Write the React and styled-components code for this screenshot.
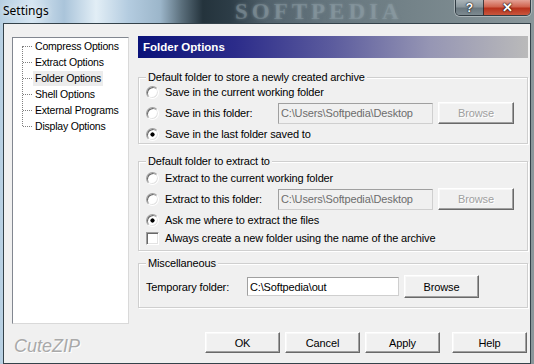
import styled, { createGlobalStyle } from "styled-components";

const GlobalStyle = createGlobalStyle`
  html, body {
    margin: 0;
    padding: 0;
    background: #7d8c92;
  }
  * {
    box-sizing: border-box;
  }
`;

const uiFont = `"Liberation Sans", Arial, sans-serif`;

const Window = styled.div`
  position: relative;
  width: 534px;
  height: 364px;
  overflow: hidden;
  display: flex;
  flex-direction: column;
  padding: 0 3px;
  background: linear-gradient(
    to right,
    #b6cfe2 0%,
    #d6e6f2 6%,
    #aac4da 12%,
    #e2eef6 18%,
    #b4cce0 24%,
    #9cb6ca 30%,
    #5b6f7c 34%,
    #24333c 38%,
    #2c3c46 43%,
    #52626c 50%,
    #66767e 62%,
    #738288 76%,
    #7f8d92 90%,
    #8a979b 100%
  );
`;

const TitleBar = styled.div`
  position: relative;
  height: 23px;
  display: flex;
  align-items: flex-start;
  flex-shrink: 0;
`;

const Title = styled.span`
  font-family: "Noto Sans", "Open Sans", sans-serif;
  font-size: 12px;
  line-height: 21px;
  color: #000;
  text-shadow: 0 0 6px rgba(255, 255, 255, 0.9);
`;

const Watermark = styled.span`
  position: absolute;
  left: 232px;
  top: 1px;
  font-family: "Liberation Serif", serif;
  font-weight: bold;
  font-size: 23px;
  line-height: 22px;
  letter-spacing: 4px;
  color: rgba(150, 166, 174, 0.4);
  text-shadow: 0 0 3px rgba(150, 166, 174, 0.5);
  pointer-events: none;
`;

const CaptionButtons = styled.div`
  margin-left: auto;
  display: flex;
  border: 1px solid rgba(30, 40, 48, 0.8);
  border-top: none;
  border-radius: 0 0 5px 5px;
  overflow: hidden;
  box-shadow: 0 0 0 1px rgba(255, 255, 255, 0.35);
`;

const CaptionButton = styled.div`
  width: ${(p) => p.$w}px;
  height: 15px;
  display: flex;
  align-items: center;
  justify-content: center;
  font-family: ${uiFont};
  font-weight: bold;
  font-size: ${(p) => (p.$close ? 13 : 12)}px;
  color: #fff;
  text-shadow: 0 0 2px #000, 0 0 1px #000;
  background: ${(p) =>
    p.$close
      ? "linear-gradient(to bottom, #e4a296 0%, #d0644f 45%, #b8321c 55%, #c9563d 100%)"
      : "linear-gradient(to bottom, #aab4b8 0%, #8a969c 45%, #6a777e 55%, #7d8a90 100%)"};
  & + & {
    border-left: 1px solid rgba(30, 40, 48, 0.8);
  }
`;

const Client = styled.div`
  flex: 1;
  display: flex;
  gap: 9px;
  padding: 12px 2px 0 8px;
  background: #f0f0f0;
  border: 1px solid #34424a;
`;

const Sidebar = styled.div`
  width: 117px;
  display: flex;
  flex-direction: column;
  flex-shrink: 0;
`;

const Tree = styled.ul`
  position: relative;
  margin: 1px 0 0;
  padding: 0;
  list-style: none;
  height: 287px;
  background: #fff;
  border: 1px solid;
  border-color: #828790 #d9d9d9 #d9d9d9 #828790;
  &::before {
    content: "";
    position: absolute;
    left: 9px;
    top: 8px;
    height: 80px;
    border-left: 1px dotted #808080;
  }
`;

const TreeItem = styled.li`
  position: relative;
  height: 16px;
  padding-left: 20px;
  display: flex;
  align-items: center;
  &::before {
    content: "";
    position: absolute;
    left: 10px;
    top: 8px;
    width: 9px;
    border-top: 1px dotted #808080;
  }
`;

const TreeLabel = styled.span`
  font-family: ${uiFont};
  font-size: 10.5px;
  letter-spacing: -0.2px;
  line-height: 15px;
  padding: 0 2px;
  color: #000;
  background: ${(p) => (p.$selected ? "#ececec" : "transparent")};
`;

const Brand = styled.div`
  margin-top: 12px;
  padding-left: 2px;
  font-family: ${uiFont};
  font-style: italic;
  font-size: 18px;
  line-height: 20px;
  color: #a9a9a9;
  text-shadow: 1px 1px 0 #fff;
`;

const Main = styled.div`
  flex: 1;
  display: flex;
  flex-direction: column;
`;

const Header = styled.div`
  height: 22px;
  display: flex;
  align-items: center;
  padding-left: 5px;
  font-family: ${uiFont};
  font-weight: bold;
  font-size: 11.5px;
  color: #fff;
  background: linear-gradient(
    to right,
    #0a1279 0%,
    #2c2c8a 25%,
    #5c5c9e 50%,
    #9696b4 75%,
    #bababa 100%
  );
`;

const Group = styled.div`
  position: relative;
  margin-top: ${(p) => p.$top}px;
  padding: ${(p) => p.$pad};
  display: flex;
  flex-direction: column;
  gap: 2px;
  border: 1px solid #cfcfcf;
  box-shadow: inset 1px 1px 0 #fff, 1px 1px 0 #fff;
`;

const GroupCaption = styled.span`
  position: absolute;
  left: 7px;
  top: -7px;
  padding: 0 2px;
  background: #f0f0f0;
  font-family: ${uiFont};
  font-size: 11px;
  letter-spacing: -0.15px;
  line-height: 13px;
  color: #000;
`;

const Row = styled.div`
  height: ${(p) => p.$h || 16}px;
  display: flex;
  align-items: center;
  font-family: ${uiFont};
  font-size: 11px;
  letter-spacing: -0.15px;
  color: #000;
`;

const OptionLabel = styled.label`
  display: flex;
  align-items: center;
  gap: 6px;
  width: ${(p) => (p.$w ? `${p.$w}px` : "auto")};
  flex-shrink: 0;
`;

const Radio = styled.span`
  width: 13px;
  height: 13px;
  border-radius: 50%;
  border: 1px solid;
  border-color: #a0a0a0 #fff #fff #a0a0a0;
  box-shadow: inset 1px 1px 0 #696969, inset -1px -1px 0 #e3e3e3;
  background: ${(p) =>
    p.$checked
      ? "radial-gradient(circle, #000 0, #000 1.8px, #fff 2.4px)"
      : "#fff"};
  flex-shrink: 0;
`;

const Checkbox = styled.span`
  width: 13px;
  height: 13px;
  border: 1px solid;
  border-color: #a0a0a0 #fff #fff #a0a0a0;
  box-shadow: inset 1px 1px 0 #696969, inset -1px -1px 0 #e3e3e3;
  background: #fff;
  flex-shrink: 0;
`;

const PlainLabel = styled.span`
  width: ${(p) => p.$w}px;
  flex-shrink: 0;
`;

const PathInput = styled.div`
  width: ${(p) => p.$w}px;
  height: ${(p) => p.$h || 21}px;
  display: flex;
  align-items: center;
  padding-left: 2px;
  border: 1px solid;
  border-color: #a0a0a0 #cfcfcf #cfcfcf #a0a0a0;
  background: ${(p) => (p.$disabled ? "#f0f0f0" : "#fff")};
  color: ${(p) => (p.$disabled ? "#6d6d6d" : "#000")};
  white-space: nowrap;
  overflow: hidden;
`;

const Button = styled.button`
  width: ${(p) => p.$w || 75}px;
  height: ${(p) => p.$h || 21}px;
  margin-left: ${(p) => p.$gap || 0}px;
  padding: 0;
  font-family: ${uiFont};
  font-size: 11px;
  letter-spacing: -0.15px;
  background: #f0f0f0;
  border: 1px solid;
  border-color: #fff #696969 #696969 #fff;
  box-shadow: inset -1px -1px 0 #a0a0a0, inset 1px 1px 0 #f8f8f8;
  color: ${(p) => (p.disabled ? "#a0a0a0" : "#000")};
  text-shadow: ${(p) => (p.disabled ? "1px 1px 0 #fff" : "none")};
  flex-shrink: 0;
`;

const ButtonBar = styled.div`
  margin-top: 24px;
  display: flex;
  justify-content: flex-end;
  padding-right: 1px;
`;

const treeItems = [
  "Compress Options",
  "Extract Options",
  "Folder Options",
  "Shell Options",
  "External Programs",
  "Display Options",
];

const desktopPath = "C:\\Users\\Softpedia\\Desktop";

function RadioOption({ checked, label, width }) {
  return (
    <OptionLabel $w={width}>
      <Radio $checked={checked} />
      {label}
    </OptionLabel>
  );
}

export default function App() {
  return (
    <>
      <GlobalStyle />
      <Window>
        <TitleBar>
          <Title>Settings</Title>
          <Watermark>SOFTPEDIA</Watermark>
          <CaptionButtons>
            <CaptionButton $w={27}>?</CaptionButton>
            <CaptionButton $w={47} $close>
              ✕
            </CaptionButton>
          </CaptionButtons>
        </TitleBar>

        <Client>
          <Sidebar>
            <Tree>
              {treeItems.map((item) => (
                <TreeItem key={item}>
                  <TreeLabel $selected={item === "Folder Options"}>
                    {item}
                  </TreeLabel>
                </TreeItem>
              ))}
            </Tree>
            <Brand>CuteZIP</Brand>
          </Sidebar>

          <Main>
            <Header>Folder Options</Header>

            <Group $top={19} $pad="6px 7px 1px">
              <GroupCaption>
                Default folder to store a newly created archive
              </GroupCaption>
              <Row>
                <RadioOption label="Save in the current working folder" />
              </Row>
              <Row $h={22}>
                <RadioOption label="Save in this folder:" width={132} />
                <PathInput $w={155} $disabled>
                  {desktopPath}
                </PathInput>
                <Button $w={76} $h={22} $gap={5} disabled>
                  Browse
                </Button>
              </Row>
              <Row>
                <RadioOption checked label="Save in the last folder saved to" />
              </Row>
            </Group>

            <Group $top={17} $pad="8px 7px 4px">
              <GroupCaption>Default folder to extract to</GroupCaption>
              <Row>
                <RadioOption label="Extract to the current working folder" />
              </Row>
              <Row $h={22}>
                <RadioOption label="Extract to this folder:" width={132} />
                <PathInput $w={155} $disabled>
                  {desktopPath}
                </PathInput>
                <Button $w={76} $h={22} $gap={5} disabled>
                  Browse
                </Button>
              </Row>
              <Row>
                <RadioOption checked label="Ask me where to extract the files" />
              </Row>
              <Row>
                <OptionLabel>
                  <Checkbox />
                  Always create a new folder using the name of the archive
                </OptionLabel>
              </Row>
            </Group>

            <Group $top={12} $pad="11px 7px 9px">
              <GroupCaption>Miscellaneous</GroupCaption>
              <Row $h={23}>
                <PlainLabel $w={101}>Temporary folder:</PlainLabel>
                <PathInput $w={152} $h={19}>
                  C:\Softpedia\out
                </PathInput>
                <Button $w={75} $h={23} $gap={5}>
                  Browse
                </Button>
              </Row>
            </Group>

            <ButtonBar>
              <Button>OK</Button>
              <Button $gap={5}>Cancel</Button>
              <Button $gap={5}>Apply</Button>
              <Button $gap={12}>Help</Button>
            </ButtonBar>
          </Main>
        </Client>
      </Window>
    </>
  );
}
